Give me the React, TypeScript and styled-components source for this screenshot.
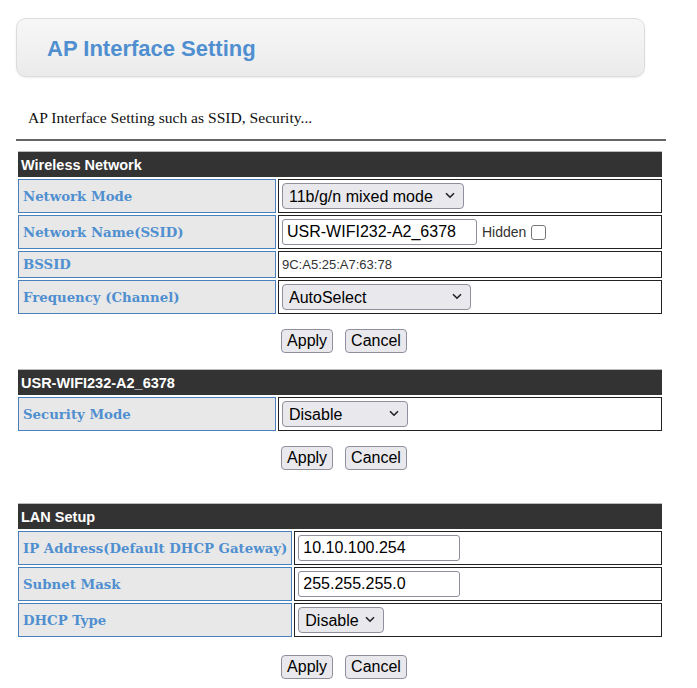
import React from 'react';
import styled, { createGlobalStyle } from 'styled-components';

const GlobalStyle = createGlobalStyle`
  body {
    margin: 0;
    background: #fff;
    font-family: 'Liberation Sans', Arial, sans-serif;
  }
`;

const Page = styled.div`
  padding: 18px 31px 10px 16px;
  width: 650px;
`;

const TitleBox = styled.div`
  width: 597px;
  height: 57px;
  border: 1px solid #dcdcdc;
  border-radius: 10px;
  background: linear-gradient(#f7f7f7, #ebebeb);
  box-shadow: 0 1px 2px rgba(0, 0, 0, 0.08);
  display: flex;
  align-items: center;
  padding-left: 30px;
`;

const Title = styled.h1`
  margin: 2px 0 0 0;
  font-family: 'Liberation Sans', Arial, sans-serif;
  font-size: 22px;
  font-weight: bold;
  color: #4f8fd0;
`;

const Description = styled.p`
  margin: 32px 0 0 12px;
  font-family: 'Liberation Serif', 'Times New Roman', serif;
  font-size: 15.6px;
  color: #111;
`;

const Rule = styled.hr`
  margin: 12px 0 8px 0;
  border: none;
  border-top: 2px solid #666;
  width: 650px;
`;

const Table = styled.table<{ $top?: number }>`
  width: 648px;
  margin: ${(p) => p.$top ?? 0}px 0 0 0;
  border-collapse: separate;
  border-spacing: 2px;
  font-size: 13px;
`;

const HeadCell = styled.td`
  background: #333;
  border-top: 1px solid #bbb;
  color: #fff;
  font-family: 'Liberation Sans', Arial, sans-serif;
  font-weight: bold;
  font-size: 14.5px;
  height: 25px;
  padding: 0 3px;
`;

const LabelCell = styled.td<{ $w: number }>`
  width: ${(p) => p.$w}px;
  background: #e8e8e8;
  border: 1px solid #4a80bd;
  color: #4f8fd0;
  font-family: 'DejaVu Serif', Georgia, serif;
  font-weight: bold;
  font-size: 13.3px;
  padding: 3px 4px;
  white-space: nowrap;
`;

const ValueCell = styled.td<{ $text?: boolean }>`
  border: 1px solid #222;
  padding: 3px;
  font-family: 'Liberation Sans', Arial, sans-serif;
  font-size: 13px;
  color: #333;
  height: ${(p) => (p.$text ? 19 : 26)}px;
`;

const SelectWrap = styled.span`
  position: relative;
  display: inline-block;
  vertical-align: middle;
  svg {
    position: absolute;
    right: 9px;
    top: 9px;
    pointer-events: none;
  }
`;

const Select = styled.select<{ $w: number }>`
  appearance: none;
  display: block;
  width: ${(p) => p.$w}px;
  height: 26px;
  font-family: 'Liberation Sans', Arial, sans-serif;
  font-size: 16px;
  color: #000;
  background-color: #e9e9ed;
  border: 1px solid #8f8f9d;
  border-radius: 4px;
  padding: 0 24px 0 6px;
  margin: 0;
`;

const Chevron = () => (
  <svg width="10" height="7" viewBox="0 0 10 7">
    <path d="M1 1.2 L5 5.2 L9 1.2" fill="none" stroke="#222" strokeWidth="1.6" />
  </svg>
);

const Dropdown = ({
  width,
  value,
  options,
}: {
  width: number;
  value: string;
  options: string[];
}) => (
  <SelectWrap>
    <Select $w={width} defaultValue={value}>
      {options.map((o) => (
        <option key={o} value={o}>
          {o}
        </option>
      ))}
    </Select>
    <Chevron />
  </SelectWrap>
);

const TextInput = styled.input<{ $w: number }>`
  width: ${(p) => p.$w}px;
  height: 26px;
  box-sizing: border-box;
  font-family: 'Liberation Sans', Arial, sans-serif;
  font-size: 16px;
  color: #000;
  border: 1px solid #8f8f9d;
  border-radius: 3px;
  padding: 1px 4px;
  margin: 0;
  vertical-align: middle;
`;

const Inline = styled.div`
  display: flex;
  align-items: center;
  gap: 5px;
`;

const Hidden = styled.label`
  display: flex;
  align-items: center;
  gap: 5px;
  color: #333;
  font-size: 14px;
`;

const Checkbox = styled.span`
  display: inline-block;
  width: 13px;
  height: 13px;
  border: 1.5px solid #767676;
  border-radius: 3px;
  background: #fff;
`;

const Buttons = styled.div<{ $top: number }>`
  display: flex;
  justify-content: center;
  gap: 12px;
  width: 650px;
  margin: ${(p) => p.$top}px 0 0 3px;
`;

const Button = styled.button`
  height: 24px;
  font-family: 'Liberation Sans', Arial, sans-serif;
  font-size: 16px;
  color: #000;
  background: #e9e9ed;
  border: 1px solid #8f8f9d;
  border-radius: 4px;
  padding: 0 5px;
  margin: 0;
`;

const ActionRow = ({ top = 13 }: { top?: number }) => (
  <Buttons $top={top}>
    <Button>Apply</Button>
    <Button>Cancel</Button>
  </Buttons>
);

export default function App() {
  return (
    <Page>
      <GlobalStyle />
      <TitleBox>
        <Title>AP Interface Setting</Title>
      </TitleBox>
      <Description>AP Interface Setting such as SSID, Security...</Description>
      <Rule />

      <Table>
        <tbody>
          <tr>
            <HeadCell colSpan={2}>Wireless Network</HeadCell>
          </tr>
          <tr>
            <LabelCell $w={248}>Network Mode</LabelCell>
            <ValueCell>
              <Dropdown width={182} value="11b/g/n mixed mode" options={['11b/g/n mixed mode', '11b/g mixed mode', '11b only']} />
            </ValueCell>
          </tr>
          <tr>
            <LabelCell $w={248}>Network Name(SSID)</LabelCell>
            <ValueCell>
              <Inline>
                <TextInput $w={195} defaultValue="USR-WIFI232-A2_6378" />
                <Hidden>
                  Hidden <Checkbox />
                </Hidden>
              </Inline>
            </ValueCell>
          </tr>
          <tr>
            <LabelCell $w={248}>BSSID</LabelCell>
            <ValueCell $text>9C:A5:25:A7:63:78</ValueCell>
          </tr>
          <tr>
            <LabelCell $w={248}>Frequency (Channel)</LabelCell>
            <ValueCell>
              <Dropdown width={189} value="AutoSelect" options={['AutoSelect', '2412MHz (Channel 1)']} />
            </ValueCell>
          </tr>
        </tbody>
      </Table>
      <ActionRow />

      <Table $top={14}>
        <tbody>
          <tr>
            <HeadCell colSpan={2}>USR-WIFI232-A2_6378</HeadCell>
          </tr>
          <tr>
            <LabelCell $w={248}>Security Mode</LabelCell>
            <ValueCell>
              <Dropdown width={126} value="Disable" options={['Disable', 'WPA2-PSK']} />
            </ValueCell>
          </tr>
        </tbody>
      </Table>
      <ActionRow />

      <Table $top={31}>
        <tbody>
          <tr>
            <HeadCell colSpan={2}>LAN Setup</HeadCell>
          </tr>
          <tr>
            <LabelCell $w={264}>IP Address(Default DHCP Gateway)</LabelCell>
            <ValueCell>
              <TextInput $w={162} defaultValue="10.10.100.254" />
            </ValueCell>
          </tr>
          <tr>
            <LabelCell $w={264}>Subnet Mask</LabelCell>
            <ValueCell>
              <TextInput $w={162} defaultValue="255.255.255.0" />
            </ValueCell>
          </tr>
          <tr>
            <LabelCell $w={264}>DHCP Type</LabelCell>
            <ValueCell>
              <Dropdown width={86} value="Disable" options={['Disable', 'Server']} />
            </ValueCell>
          </tr>
        </tbody>
      </Table>
      <ActionRow top={16} />
    </Page>
  );
}
